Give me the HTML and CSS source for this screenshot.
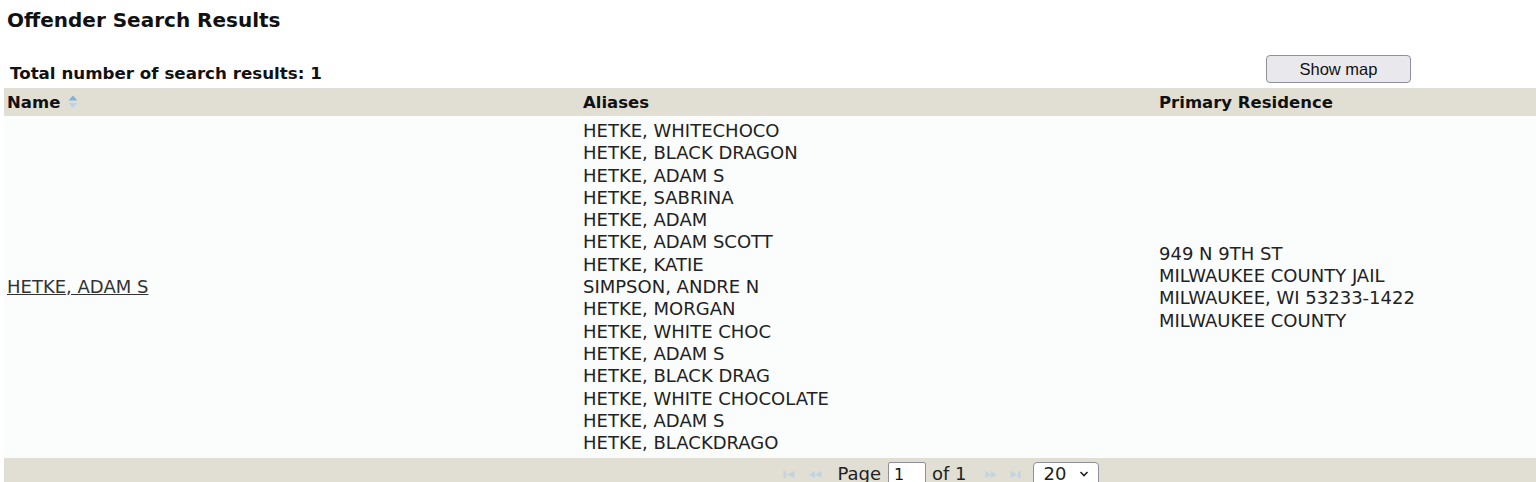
FILE: index.html
```html
<!DOCTYPE html>
<html lang="en">
  <head>
    <meta charset="UTF-8" />
    <title>Offender Search Results</title>
    <link rel="stylesheet" href="styles.css">
  </head>
  <body>
    <h1 class="page-title">Offender Search Results</h1>

    <div class="results-bar">
      <span class="results-count">Total number of search results: 1</span>
      <button class="map-button">Show map</button>
    </div>

    <div class="results">
      <table class="offender-table">
        <thead>
          <tr>
            <th>
              Name
              <svg class="sort-icon" width="10" height="14" viewBox="0 0 10 14">
                <path d="M5 0.5 L9.5 5.5 L0.5 5.5 Z" fill="#7fb1da" />
                <path d="M0.5 8 L9.5 8 L5 13 Z" fill="#b9d3ea" />
              </svg>
            </th>
            <th>Aliases</th>
            <th>Primary Residence</th>
          </tr>
        </thead>
        <tbody>
          <tr>
            <td><a href="#" class="offender-link">HETKE, ADAM S</a></td>
            <td>
              HETKE, WHITECHOCO<br />
              HETKE, BLACK DRAGON<br />
              HETKE, ADAM S<br />
              HETKE, SABRINA<br />
              HETKE, ADAM<br />
              HETKE, ADAM SCOTT<br />
              HETKE, KATIE<br />
              SIMPSON, ANDRE N<br />
              HETKE, MORGAN<br />
              HETKE, WHITE CHOC<br />
              HETKE, ADAM S<br />
              HETKE, BLACK DRAG<br />
              HETKE, WHITE CHOCOLATE<br />
              HETKE, ADAM S<br />
              HETKE, BLACKDRAGO
            </td>
            <td>
              949 N 9TH ST<br />
              MILWAUKEE COUNTY JAIL<br />
              MILWAUKEE, WI 53233-1422<br />
              MILWAUKEE COUNTY
            </td>
          </tr>
        </tbody>
        <tfoot>
          <tr>
            <td colspan="3" class="pager-cell">
              <div class="pager">
                <svg class="pager-first" width="12" height="9" viewBox="0 0 12 9">
                  <rect x="0.5" y="1" width="2.5" height="7" fill="#c3d3e0" />
                  <path d="M3.5 4.5 L11.5 1 L11.5 8 Z" fill="#c3d3e0" />
                </svg>
                <svg class="pager-prev" width="14" height="9" viewBox="0 0 14 9">
                  <path d="M0.5 4.5 L7 1 L7 8 Z" fill="#c3d3e0" />
                  <path d="M7 4.5 L13.5 1 L13.5 8 Z" fill="#c3d3e0" />
                </svg>
                <span class="pager-label">Page</span>
                <input type="text" class="page-input" value="1" />
                <span class="pager-total">of 1</span>
                <svg class="pager-next" width="12" height="9" viewBox="0 0 12 9">
                  <path d="M0.5 1 L6 4.5 L0.5 8 Z" fill="#c3d3e0" />
                  <path d="M6 1 L11.5 4.5 L6 8 Z" fill="#c3d3e0" />
                </svg>
                <svg class="pager-last" width="11" height="9" viewBox="0 0 11 9">
                  <path d="M0.5 1 L7.5 4.5 L0.5 8 Z" fill="#c3d3e0" />
                  <rect x="8" y="1" width="2.5" height="7" fill="#c3d3e0" />
                </svg>
                <span class="page-size">
                  20
                  <svg width="10" height="6" viewBox="0 0 10 6">
                    <path d="M1.5 1 L5 4.5 L8.5 1" fill="none" stroke="#222" stroke-width="1.6" />
                  </svg>
                </span>
              </div>
            </td>
          </tr>
        </tfoot>
      </table>
    </div>
  </body>
</html>
```

FILE: styles.css
```css
body {
  margin: 0;
  padding: 0;
  font-family: "DejaVu Sans", Verdana, sans-serif;
  color: #222;
  background-color: #fff;
  overflow: hidden;
}

.page-title {
  margin: 0;
  padding: 8px 7px 0;
  font-size: 20px;
  line-height: 24px;
  font-weight: bold;
  color: #111;
}

.results-bar {
  width: 1411px;
  margin: 23px 0 5px;
  padding-left: 10px;
  box-sizing: border-box;
  display: flex;
  justify-content: space-between;
  align-items: flex-end;
}

.results-count {
  font-size: 16.7px;
  line-height: 20px;
  font-weight: bold;
  color: #111;
}

.map-button {
  width: 145px;
  height: 28px;
  padding: 0;
  background-color: #e9e9ed;
  border: 1px solid #8f8f9d;
  border-radius: 4px;
  font-family: "Liberation Sans", Arial, sans-serif;
  font-size: 16.5px;
  color: #111;
}

.results {
  width: 100%;
  overflow: hidden;
}

.offender-table {
  margin-left: 4px;
  width: 1728px;
  border-collapse: collapse;
  table-layout: fixed;
}

.offender-table th {
  height: 28px;
  padding: 0 3px;
  text-align: left;
  font-size: 16.5px;
  font-weight: bold;
  color: #111;
  background-color: #e1dfd3;
}

.sort-icon {
  vertical-align: -1px;
  margin-left: 2px;
}

.offender-table td {
  padding: 4px 3px;
  font-size: 18px;
  line-height: 22.3px;
  vertical-align: middle;
  background-color: #fbfdfd;
}

.offender-link {
  color: #333;
  text-decoration: underline;
}

.offender-table td.pager-cell {
  padding: 4px 0 4px 146px;
  line-height: 22px;
  background-color: #e1dfd3;
}

.pager {
  display: flex;
  justify-content: center;
  align-items: center;
}

.pager-first {
  margin-right: 13px;
}

.pager-prev {
  margin-right: 15px;
}

.page-input {
  width: 38px;
  height: 24px;
  margin: 0 6px 0 7px;
  box-sizing: border-box;
  padding: 0 5px;
  border: 1px solid #8f8f9d;
  border-radius: 2px;
  font-family: "DejaVu Sans", Verdana, sans-serif;
  font-size: 16px;
  background-color: #fff;
  color: #111;
}

.pager-total {
  margin-right: 18px;
}

.pager-next {
  margin-right: 13px;
}

.pager-last {
  margin-right: 12px;
}

.page-size {
  width: 66px;
  height: 24px;
  box-sizing: border-box;
  padding: 0 9px 0 10px;
  border: 1px solid #8f8f9d;
  border-radius: 4px;
  background-color: #fff;
  display: flex;
  justify-content: space-between;
  align-items: center;
  font-size: 18px;
}
```
